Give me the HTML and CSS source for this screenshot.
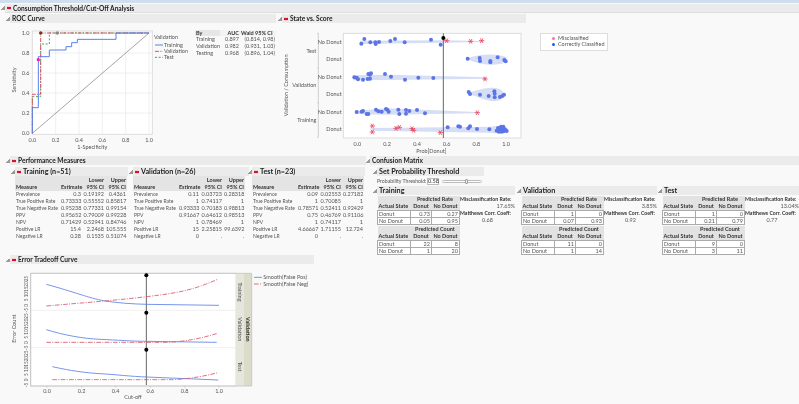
FILE: index.html
```html
<!DOCTYPE html>
<html lang="en">
<head>
<meta charset="utf-8">
<title>Consumption Threshold/Cut-Off Analysis</title>
<link rel="stylesheet" href="styles.css">
</head>
<body>
<div class="strip"></div>
<div class="hd hd-top"><i class="tri"></i><i class="red"></i>Consumption Threshold/Cut-Off Analysis</div>

<div class="row1">
  <section class="roc">
    <div class="hd"><i class="tri"></i>ROC Curve</div>
    <div class="roc-body">
      <svg class="roc-plot" viewBox="30 69 555 393">
        <rect class="plot" x="97" y="93" width="360" height="310"/>
        <path class="grid" d="M167 93V403M237 93V403M307 93V403M377 93V403M447 93V403M97 339H457M97 279H457M97 219H457M97 159H457M97 99H457"/>
        <path class="diag" d="M97 400L447 99"/>
        <path class="roc-test" d="M97 400V290H122V132H148V99H447"/>
        <path class="roc-val" d="M97 400V283H122V99H447"/>
        <path class="roc-train" d="M97 400V323H115V170H148V150H198V140H215V128H232V118H348V99H447"/>
        <circle class="dot-brown" cx="122" cy="99" r="5"/>
        <circle class="dot-gray" cx="172" cy="99" r="5"/>
        <circle class="dot-mag" cx="115" cy="179" r="5"/>
        <g class="tick">
          <text x="97" y="425" text-anchor="middle">0.0</text><text x="167" y="425" text-anchor="middle">0.2</text><text x="237" y="425" text-anchor="middle">0.4</text><text x="307" y="425" text-anchor="middle">0.6</text><text x="377" y="425" text-anchor="middle">0.8</text><text x="447" y="425" text-anchor="middle">1.0</text>
          <text x="88" y="105" text-anchor="end">1.0</text><text x="88" y="165" text-anchor="end">0.8</text><text x="88" y="225" text-anchor="end">0.6</text><text x="88" y="285" text-anchor="end">0.4</text><text x="88" y="345" text-anchor="end">0.2</text><text x="88" y="405" text-anchor="end">0.0</text>
          <text x="277" y="446" text-anchor="middle">1-Specificity</text>
          <text transform="translate(47 240) rotate(-90)" text-anchor="middle">Sensitivity</text>
          <text x="462" y="117">Validation</text>
          <text x="492" y="141">Training</text><text x="492" y="160">Validation</text><text x="492" y="178">Test</text>
        </g>
        <path class="roc-train" d="M465 135H489"/><path class="roc-val" d="M465 154H489"/><path class="roc-test" d="M465 172H489"/>
      </svg>
      <table class="auc">
        <tr><th class="auc-by">By</th><th class="auc-n">AUC</th><th class="auc-w">Wald 95% CI</th></tr>
        <tr><td>Training</td><td class="n">0.897</td><td class="n">(0.814, 0.98)</td></tr>
        <tr><td>Validation</td><td class="n">0.982</td><td class="n">(0.931, 1.03)</td></tr>
        <tr><td>Testing</td><td class="n">0.968</td><td class="n">(0.896, 1.04)</td></tr>
      </table>
    </div>
  </section>

  <section class="state">
    <div class="hd"><i class="tri"></i><i class="red"></i>State vs. Score</div>
    <div class="state-body">
      <svg class="state-plot" viewBox="36 69 732 396">
        <defs>
          <g id="s"><path class="star" d="M-8 0H8M-4 -7L4 7M-4 7L4 -7"/></g>
        </defs>
        <rect class="plot" x="220" y="100" width="533" height="314"/>
        <path class="violin" d="M270 122L520 121L640 123L640 126L520 128L270 132Z"/>
        <path class="violin" d="M590 176C630 160 680 160 710 172V186C680 200 630 196 590 176Z"/>
        <path class="violin" d="M250 226L360 224L650 232V236L360 240L250 241Z"/>
        <path class="violin" d="M595 278C630 270 660 256 690 268C705 276 705 290 690 300C660 312 630 290 595 282Z"/>
        <path class="violin" d="M255 333L350 325L620 336V340L350 344L255 342Z"/>
        <path class="violin" d="M305 384L520 382L660 380C690 376 715 382 715 390C715 398 690 402 660 398L520 396L305 392Z"/>
        <path class="ax" d="M145 100V412M145 100H141M145 204H141M145 308H141M145 412H141"/>
        <path class="thr" d="M520 100V414"/>
        <circle class="blk" cx="520" cy="114" r="6"/>
        <g class="b">
          <circle cx="283" cy="117"/><circle cx="274" cy="131"/><circle cx="301" cy="127"/><circle cx="316" cy="127"/><circle cx="317" cy="132"/><circle cx="327" cy="126"/><circle cx="361" cy="123"/><circle cx="375" cy="117"/><circle cx="404" cy="127"/><circle cx="483" cy="119"/><circle cx="512" cy="134"/>
          <circle cx="593" cy="176"/><circle cx="629" cy="174"/><circle cx="630" cy="183"/><circle cx="661" cy="183"/><circle cx="661" cy="187"/><circle cx="683" cy="172"/><circle cx="703" cy="180"/><circle cx="707" cy="184"/>
          <circle cx="253" cy="232"/><circle cx="260" cy="233"/><circle cx="264" cy="238"/><circle cx="279" cy="239"/><circle cx="293" cy="237"/><circle cx="300" cy="236"/><circle cx="295" cy="222"/><circle cx="303" cy="220"/><circle cx="300" cy="224"/><circle cx="345" cy="222"/><circle cx="363" cy="230"/><circle cx="405" cy="239"/><circle cx="445" cy="233"/><circle cx="490" cy="234"/>
          <circle cx="596" cy="276"/><circle cx="600" cy="282"/><circle cx="630" cy="284"/><circle cx="656" cy="288"/><circle cx="673" cy="274"/><circle cx="674" cy="281"/><circle cx="674" cy="292"/><circle cx="690" cy="291"/><circle cx="697" cy="288"/><circle cx="702" cy="284"/>
          <circle cx="260" cy="336"/><circle cx="275" cy="335"/><circle cx="279" cy="333"/><circle cx="290" cy="342"/><circle cx="295" cy="342"/><circle cx="318" cy="329"/><circle cx="325" cy="334"/><circle cx="335" cy="335"/><circle cx="348" cy="327"/><circle cx="352" cy="329"/><circle cx="356" cy="335"/><circle cx="385" cy="329"/><circle cx="388" cy="342"/><circle cx="408" cy="330"/><circle cx="408" cy="341"/><circle cx="418" cy="333"/><circle cx="441" cy="330"/><circle cx="465" cy="340"/>
          <circle cx="533" cy="382"/><circle cx="565" cy="379"/><circle cx="570" cy="380"/><circle cx="595" cy="385"/><circle cx="600" cy="379"/><circle cx="621" cy="387"/><circle cx="658" cy="388"/>
          <circle cx="680" cy="392"/><circle cx="684" cy="384"/><circle cx="687" cy="395"/><circle cx="690" cy="388"/><circle cx="693" cy="380"/><circle cx="695" cy="395"/><circle cx="698" cy="387"/><circle cx="700" cy="380"/><circle cx="701" cy="394"/><circle cx="705" cy="388"/><circle cx="710" cy="393"/>
        </g>
        <use href="#s" x="530" y="122"/><use href="#s" x="602" y="124"/><use href="#s" x="635" y="122"/><use href="#s" x="645" y="237"/><use href="#s" x="622" y="338"/>
        <use href="#s" x="307" y="378"/><use href="#s" x="307" y="396"/><use href="#s" x="378" y="385"/><use href="#s" x="388" y="382"/><use href="#s" x="426" y="386"/><use href="#s" x="431" y="391"/><use href="#s" x="511" y="398"/>
        <g class="tick">
          <text x="215" y="131" text-anchor="end">No Donut</text><text x="215" y="184" text-anchor="end">Donut</text><text x="215" y="236" text-anchor="end">No Donut</text><text x="215" y="289" text-anchor="end">Donut</text><text x="215" y="341" text-anchor="end">No Donut</text><text x="215" y="393" text-anchor="end">Donut</text>
          <text x="139" y="158" text-anchor="end">Test</text><text x="139" y="262" text-anchor="end">Validation</text><text x="139" y="367" text-anchor="end">Training</text>
          <text transform="translate(53 256) rotate(-90)" text-anchor="middle">Validation / Consumption</text>
          <text x="262" y="438" text-anchor="middle">0.0</text><text x="351" y="438" text-anchor="middle">0.2</text><text x="441" y="438" text-anchor="middle">0.4</text><text x="530" y="438" text-anchor="middle">0.6</text><text x="619" y="438" text-anchor="middle">0.8</text><text x="708" y="438" text-anchor="middle">1.0</text>
          <text x="484" y="459" text-anchor="middle">Prob[Donut]</text>
        </g>
      </svg>
      <div class="legend">
        <div class="leg-row"><i class="leg-mark mis"></i>Misclassified</div>
        <div class="leg-row"><i class="leg-mark ok"></i>Correctly Classified</div>
      </div>
    </div>
  </section>
</div>

<div class="row2">
  <section class="perf">
    <div class="hd"><i class="tri"></i><i class="red"></i>Performance Measures</div>
    <div class="perf-cols">
      <div class="pc pc-a">
        <div class="hd hd-big"><i class="tri"></i><i class="red"></i>Training (n=51)</div>
        <table class="pm">
          <tr><th class="c1 bot">Measure</th><th class="c2 bot num">Estimate</th><th class="c3 num">Lower<br>95% CI</th><th class="c4 num">Upper<br>95% CI</th></tr>
          <tr><td>Prevalence</td><td>0.3</td><td>0.19192</td><td>0.4361</td></tr>
          <tr><td>True Positive Rate</td><td>0.73333</td><td>0.55552</td><td>0.85817</td></tr>
          <tr><td>True Negative Rate</td><td>0.95238</td><td>0.77331</td><td>0.99154</td></tr>
          <tr><td>PPV</td><td>0.95652</td><td>0.79009</td><td>0.99228</td></tr>
          <tr><td>NPV</td><td>0.71429</td><td>0.52941</td><td>0.84746</td></tr>
          <tr><td>Positive LR</td><td>15.4</td><td>2.2468</td><td>105.555</td></tr>
          <tr><td>Negative LR</td><td>0.28</td><td>0.1535</td><td>0.51074</td></tr>
        </table>
      </div>
      <div class="pc pc-b">
        <div class="hd hd-big"><i class="tri"></i><i class="red"></i>Validation (n=26)</div>
        <table class="pm">
          <tr><th class="c1 bot">Measure</th><th class="c2 bot num">Estimate</th><th class="c3 num">Lower<br>95% CI</th><th class="c4 num">Upper<br>95% CI</th></tr>
          <tr><td>Prevalence</td><td>0.11</td><td>0.03723</td><td>0.28318</td></tr>
          <tr><td>True Positive Rate</td><td>1</td><td>0.74117</td><td>1</td></tr>
          <tr><td>True Negative Rate</td><td>0.93333</td><td>0.70183</td><td>0.98813</td></tr>
          <tr><td>PPV</td><td>0.91667</td><td>0.64612</td><td>0.98513</td></tr>
          <tr><td>NPV</td><td>1</td><td>0.78469</td><td>1</td></tr>
          <tr><td>Positive LR</td><td>15</td><td>2.25815</td><td>99.6392</td></tr>
          <tr><td>Negative LR</td><td>0</td><td>.</td><td>.</td></tr>
        </table>
      </div>
      <div class="pc pc-c">
        <div class="hd hd-big"><i class="tri"></i><i class="red"></i>Test (n=23)</div>
        <table class="pm">
          <tr><th class="c1 bot">Measure</th><th class="c2 bot num">Estimate</th><th class="c3 num">Lower<br>95% CI</th><th class="c4 num">Upper<br>95% CI</th></tr>
          <tr><td>Prevalence</td><td>0.09</td><td>0.02553</td><td>0.27182</td></tr>
          <tr><td>True Positive Rate</td><td>1</td><td>0.70085</td><td>1</td></tr>
          <tr><td>True Negative Rate</td><td>0.78571</td><td>0.52411</td><td>0.92429</td></tr>
          <tr><td>PPV</td><td>0.75</td><td>0.46769</td><td>0.91106</td></tr>
          <tr><td>NPV</td><td>1</td><td>0.74117</td><td>1</td></tr>
          <tr><td>Positive LR</td><td>4.66667</td><td>1.71155</td><td>12.724</td></tr>
          <tr><td>Negative LR</td><td>0</td><td>.</td><td>.</td></tr>
        </table>
      </div>
    </div>
  </section>

  <section class="conf">
    <div class="hd"><i class="tri"></i>Confusion Matrix</div>
    <div class="conf-in">
      <div class="hd hd-big thr-hd"><i class="tri"></i>Set Probability Threshold</div>
      <div class="thr-row">
        <span class="thr-label">Probability Threshold:</span>
        <span class="thr-box">0.58</span>
        <span class="slider"><i class="knob"></i></span>
      </div>
      <div class="cm-cols">
        <div class="cm cm-a">
          <div class="hd hd-big"><i class="tri"></i>Training</div>
          <div class="cm-body">
            <div class="cm-tabs">
              <table class="ct">
                <colgroup><col class="k1"><col class="k2"><col class="k3"></colgroup>
                <tr><th class="g"></th><th class="g" colspan="2">Predicted Rate</th></tr>
                <tr><th class="g l">Actual State</th><th class="g">Donut</th><th class="g">No Donut</th></tr>
                <tr><td class="l">Donut</td><td>0.73</td><td>0.27</td></tr>
                <tr><td class="l">No Donut</td><td>0.05</td><td>0.95</td></tr>
              </table>
              <table class="ct">
                <colgroup><col class="k1"><col class="k2"><col class="k3"></colgroup>
                <tr><th class="g"></th><th class="g" colspan="2">Predicted Count</th></tr>
                <tr><th class="g l">Actual State</th><th class="g">Donut</th><th class="g">No Donut</th></tr>
                <tr><td class="l">Donut</td><td>22</td><td>8</td></tr>
                <tr><td class="l">No Donut</td><td>1</td><td>20</td></tr>
              </table>
            </div>
            <div class="side"><b>Misclassification Rate:</b><span class="v">17.65%</span><b>Matthews Corr. Coeff:</b><span class="w">0.68</span></div>
          </div>
        </div>
        <div class="cm cm-b">
          <div class="hd hd-big"><i class="tri"></i>Validation</div>
          <div class="cm-body">
            <div class="cm-tabs">
              <table class="ct">
                <colgroup><col class="k1"><col class="k2"><col class="k3"></colgroup>
                <tr><th class="g"></th><th class="g" colspan="2">Predicted Rate</th></tr>
                <tr><th class="g l">Actual State</th><th class="g">Donut</th><th class="g">No Donut</th></tr>
                <tr><td class="l">Donut</td><td>1</td><td>0</td></tr>
                <tr><td class="l">No Donut</td><td>0.07</td><td>0.93</td></tr>
              </table>
              <table class="ct">
                <colgroup><col class="k1"><col class="k2"><col class="k3"></colgroup>
                <tr><th class="g"></th><th class="g" colspan="2">Predicted Count</th></tr>
                <tr><th class="g l">Actual State</th><th class="g">Donut</th><th class="g">No Donut</th></tr>
                <tr><td class="l">Donut</td><td>11</td><td>0</td></tr>
                <tr><td class="l">No Donut</td><td>1</td><td>14</td></tr>
              </table>
            </div>
            <div class="side"><b>Misclassification Rate:</b><span class="v">3.85%</span><b>Matthews Corr. Coeff:</b><span class="w">0.92</span></div>
          </div>
        </div>
        <div class="cm cm-c">
          <div class="hd hd-big"><i class="tri"></i>Test</div>
          <div class="cm-body">
            <div class="cm-tabs">
              <table class="ct">
                <colgroup><col class="k1"><col class="k2"><col class="k3"></colgroup>
                <tr><th class="g"></th><th class="g" colspan="2">Predicted Rate</th></tr>
                <tr><th class="g l">Actual State</th><th class="g">Donut</th><th class="g">No Donut</th></tr>
                <tr><td class="l">Donut</td><td>1</td><td>0</td></tr>
                <tr><td class="l">No Donut</td><td>0.21</td><td>0.79</td></tr>
              </table>
              <table class="ct">
                <colgroup><col class="k1"><col class="k2"><col class="k3"></colgroup>
                <tr><th class="g"></th><th class="g" colspan="2">Predicted Count</th></tr>
                <tr><th class="g l">Actual State</th><th class="g">Donut</th><th class="g">No Donut</th></tr>
                <tr><td class="l">Donut</td><td>9</td><td>0</td></tr>
                <tr><td class="l">No Donut</td><td>3</td><td>11</td></tr>
              </table>
            </div>
            <div class="side"><b>Misclassification Rate:</b><span class="v">13.04%</span><b>Matthews Corr. Coeff:</b><span class="w">0.77</span></div>
          </div>
        </div>
      </div>
    </div>
  </section>
</div>

<section class="err">
  <div class="hd"><i class="tri"></i><i class="red"></i>Error Tradeoff Curve</div>
  <svg class="err-plot" viewBox="30 12 930 420">
    <rect class="plot" x="92" y="40" width="616" height="338"/>
    <rect class="band1" x="708" y="40" width="24" height="338"/>
    <rect class="band2" x="732" y="40" width="23" height="338"/>
    <path class="grid" d="M92 151H732M92 263H732"/>
    <path class="ax" d="M92 40V378H755M92 40H755V378M141 378V383M245 378V383M347 378V383M451 378V383M554 378V383M657 378V383"/>
    <path class="thr" d="M439 40V375"/>
    <path class="err-b" d="M139 73C220 95 270 115 310 122S400 132 440 133L657 136"/>
    <path class="err-r" d="M139 138C250 128 340 122 440 110S580 90 655 57"/>
    <path class="err-b" d="M139 209C190 225 250 236 300 238S400 244 440 244L650 247"/>
    <path class="err-r" d="M139 247L500 247C570 244 610 232 650 221"/>
    <path class="err-b" d="M157 320C210 332 260 339 300 341S400 350 440 351L655 360"/>
    <path class="err-r" d="M157 359L520 359C580 356 620 346 655 338"/>
    <circle class="blk" cx="439" cy="46" r="6"/><circle class="blk" cx="439" cy="158" r="6"/><circle class="blk" cx="439" cy="269" r="6"/>
    <g class="tick">
      <text x="141" y="398" text-anchor="middle">0.0</text><text x="245" y="398" text-anchor="middle">0.2</text><text x="347" y="398" text-anchor="middle">0.4</text><text x="451" y="398" text-anchor="middle">0.6</text><text x="554" y="398" text-anchor="middle">0.8</text><text x="657" y="398" text-anchor="middle">1.0</text>
      <text x="399" y="418" text-anchor="middle">Cut-off</text>
      <text transform="translate(47 206) rotate(-90)" text-anchor="middle">Error Count</text>
    </g>
    <g class="tick small">
      <text transform="translate(84 56) rotate(-90)" text-anchor="middle">25</text><text transform="translate(84 72) rotate(-90)" text-anchor="middle">20</text><text transform="translate(84 88) rotate(-90)" text-anchor="middle">15</text><text transform="translate(84 104) rotate(-90)" text-anchor="middle">10</text><text transform="translate(84 120) rotate(-90)" text-anchor="middle">5</text><text transform="translate(84 136) rotate(-90)" text-anchor="middle">0</text><text transform="translate(84 151) rotate(-90)" text-anchor="middle">-5</text>
      <text transform="translate(84 168) rotate(-90)" text-anchor="middle">25</text><text transform="translate(84 184) rotate(-90)" text-anchor="middle">20</text><text transform="translate(84 200) rotate(-90)" text-anchor="middle">15</text><text transform="translate(84 216) rotate(-90)" text-anchor="middle">10</text><text transform="translate(84 232) rotate(-90)" text-anchor="middle">5</text><text transform="translate(84 248) rotate(-90)" text-anchor="middle">0</text><text transform="translate(84 263) rotate(-90)" text-anchor="middle">-5</text>
      <text transform="translate(84 280) rotate(-90)" text-anchor="middle">25</text><text transform="translate(84 296) rotate(-90)" text-anchor="middle">20</text><text transform="translate(84 312) rotate(-90)" text-anchor="middle">15</text><text transform="translate(84 328) rotate(-90)" text-anchor="middle">10</text><text transform="translate(84 344) rotate(-90)" text-anchor="middle">5</text><text transform="translate(84 360) rotate(-90)" text-anchor="middle">0</text><text transform="translate(84 375) rotate(-90)" text-anchor="middle">-5</text>
    </g>
    <g class="tick">
      <text transform="translate(715 96) rotate(90)" text-anchor="middle">Training</text>
      <text transform="translate(715 208) rotate(90)" text-anchor="middle">Validation</text>
      <text transform="translate(715 320) rotate(90)" text-anchor="middle">Test</text>
      <text transform="translate(738 208) rotate(90)" text-anchor="middle" class="strong">Validation</text>
      <text x="790" y="57">Smooth(False Pos)</text>
      <text x="790" y="77">Smooth(False Neg)</text>
    </g>
    <path class="err-b" d="M762 52H786"/><path class="err-r" d="M762 72H786"/>
  </svg>
</section>
</body>
</html>
```

FILE: styles.css
```css
* { box-sizing: border-box; }
html, body { margin: 0; padding: 0; }
body {
  width: 799px; height: 404px; overflow: hidden;
  background: #f9f9f9; color: #555;
  font: 5.5px/7px Lato, "Liberation Sans", sans-serif;
  filter: blur(0.3px);
}
.strip { height: 3px; background: #cfdeee; margin-bottom: 1px; }

.hd {
  display: flex; align-items: center;
  height: 9px; padding-left: 1px; background: #ebebeb; color: #222;
  font: 700 6.6px/9px Lato, "Liberation Sans", sans-serif;
  white-space: nowrap;
}
.hd-top { margin: 0 0 1px 5px; border-bottom: 1px solid #ddd; }
.hd-big { font-size: 7.2px; }
.tri { width: 4px; height: 4px; margin-left: -5px; margin-right: 2px; flex: none;
  background: linear-gradient(135deg, transparent 50%, #999 50%); }
.hd .red { width: 4px; height: 4px; flex: none; margin-right: 2px;
  background: linear-gradient(#f6cdd2 30%, #d5122c 30%, #d5122c 70%, #f6cdd2 70%); }

.row1 { display: flex; gap: 6px; margin-left: 10px; height: 142px; }
.roc { width: 266px; }
.roc-body { display: flex; height: 131px; }
.roc-plot { width: 185px; height: 131px; flex: none; }
.auc { border-collapse: collapse; margin-top: 7px; table-layout: fixed; width: 81px; align-self: flex-start; white-space: nowrap; }
.auc th { color: #333; font-weight: 700; padding: 0 1px; height: 6px; line-height: 6px; text-align: left; }
.auc td { padding: 0 1px; height: 7px; }
.auc-by { width: 25px; background: #e6e6e6; }
.auc-n { width: 20px; background: #f3f3f3; }
.auc th.auc-n { text-align: right; }
.auc-w { width: 36px; background: #f3f3f3; }
.auc .n { text-align: right; }

.state { width: 244px; flex: none; }
.state-body { display: flex; width: 340px; }
.state-plot { width: 244px; height: 132px; flex: none; }
.legend { width: 68px; height: 18px; margin: 10px 0 0 14px; padding: 1px 0 0 17px; flex: none;
  background: #fff; border: 1px solid #ddd; color: #555; white-space: nowrap; }
.leg-row { display: flex; align-items: center; height: 6px; line-height: 6px; }
.leg-mark { width: 3px; height: 3px; margin: 0 3px 0 -6px; border-radius: 50%; flex: none; }
.mis { background: #f0788c; }
.ok { background: #2a55e0; }

.plot { fill: #fff; stroke: #ddd; stroke-width: 3; }
.grid { fill: none; stroke: #e8e8e8; stroke-width: 2; }
.diag { fill: none; stroke: #777; stroke-width: 2; }
.roc-train { fill: none; stroke: #5b80e8; stroke-width: 3; }
.roc-val { fill: none; stroke: #d9536a; stroke-width: 3; stroke-dasharray: 12 4 3 4; }
.roc-test { fill: none; stroke: #4ea64e; stroke-width: 3; stroke-dasharray: 6 5; }
.dot-brown { fill: #6e3a1e; }
.dot-gray { fill: #888; }
.dot-mag { fill: #f016d8; }
.tick text { font: 16.5px Lato, "Liberation Sans", sans-serif; fill: #555; }
.tick .strong { font-weight: 700; fill: #333; }
.small text { font-size: 14px; }
.violin { fill: #d6def5; }
.ax { fill: none; stroke: #bbb; stroke-width: 2; }
.thr { fill: none; stroke: #666; stroke-width: 3; }
.blk { fill: #000; }
.b circle { r: 6px; fill: #5c74e6; }
.star { fill: none; stroke: #ef3d5a; stroke-width: 2.4; }

.row2 { display: flex; gap: 4px; margin-left: 10px; height: 99px; }
.perf { width: 356px; flex: none; }
.perf-cols { display: flex; margin: 2px 0 0 5px; }
.pc-a { width: 113px; margin-right: 5px; }
.pc-b { width: 116px; margin-right: 3px; }
.pc-c { width: 113px; }
.pm { border-collapse: collapse; table-layout: fixed; width: 112px; white-space: nowrap; }
.pm th { background: #e4e4e4; color: #333; font-weight: 700; height: 15px; padding: 0 1px; line-height: 7px; }
.pm .bot { vertical-align: bottom; text-align: left; }
.pm .num { text-align: right; vertical-align: bottom; }
.pm td { height: 7px; padding: 0 1px; text-align: right; line-height: 7px; }
.pm td:first-child { text-align: left; font-size: 5px; }
.c1 { width: 45px; }
.c2 { width: 22px; }
.c3 { width: 23px; }
.c4 { width: 22px; }

.conf { flex: 1; min-width: 0; }
.conf-in { margin: 2px 0 0 7px; }
.thr-hd { width: 107px; }
.thr-row { display: flex; align-items: center; height: 10px; gap: 3px; white-space: nowrap; }
.thr-label { width: 47px; font-size: 5.2px; }
.thr-box { width: 12px; height: 7px; background: #fff; border: 1px solid #bbb; text-align: center; line-height: 5px; color: #333; }
.slider { position: relative; width: 40px; height: 3px; background: #fff; border: 1px solid #bbb; border-radius: 2px; }
.knob { position: absolute; left: 22px; top: -2px; width: 3px; height: 5px; background: #e8f2fb; border: 1px solid #7aa7cf; border-radius: 1px; }
.cm-cols { display: flex; }
.cm-a { width: 138px; margin-right: 6px; }
.cm-b { width: 136px; margin-right: 5px; }
.cm-c { width: 137px; }
.cm-body { display: flex; }
.cm-tabs { width: 82px; flex: none; }
.ct { border-collapse: collapse; table-layout: fixed; width: 82px; white-space: nowrap; margin: 1px 0 0; }
.k1 { width: 33px; }
.k2 { width: 21px; }
.k3 { width: 28px; }
.ct th { font-weight: 700; height: 7px; padding: 0 1px; color: #333; text-align: center; line-height: 7px; }
.ct .g { background: #e2e2e2; }
.ct td { height: 7px; background: #fff; border: 1px solid #aaa; text-align: right; padding: 0 1px; line-height: 5px; }
.ct .l { text-align: left; }
.side { flex: 1; min-width: 0; display: flex; flex-direction: column; padding: 1px 0 0 1px; color: #333; white-space: nowrap; line-height: 7px; }
.side b { font-weight: 700; font-size: 5.2px; }
.side .v { text-align: right; color: #555; }
.side .w { text-align: center; color: #555; }

.err { margin-left: 10px; }
.err > .hd { width: 304px; }
.err-plot { display: block; width: 310px; height: 140px; }
.band1 { fill: #e6e6dc; }
.band2 { fill: #dcdccb; }
.err-b { fill: none; stroke: #5b80e8; stroke-width: 2.5; }
.err-r { fill: none; stroke: #d9536a; stroke-width: 2.5; stroke-dasharray: 14 4 3 4; }
```
